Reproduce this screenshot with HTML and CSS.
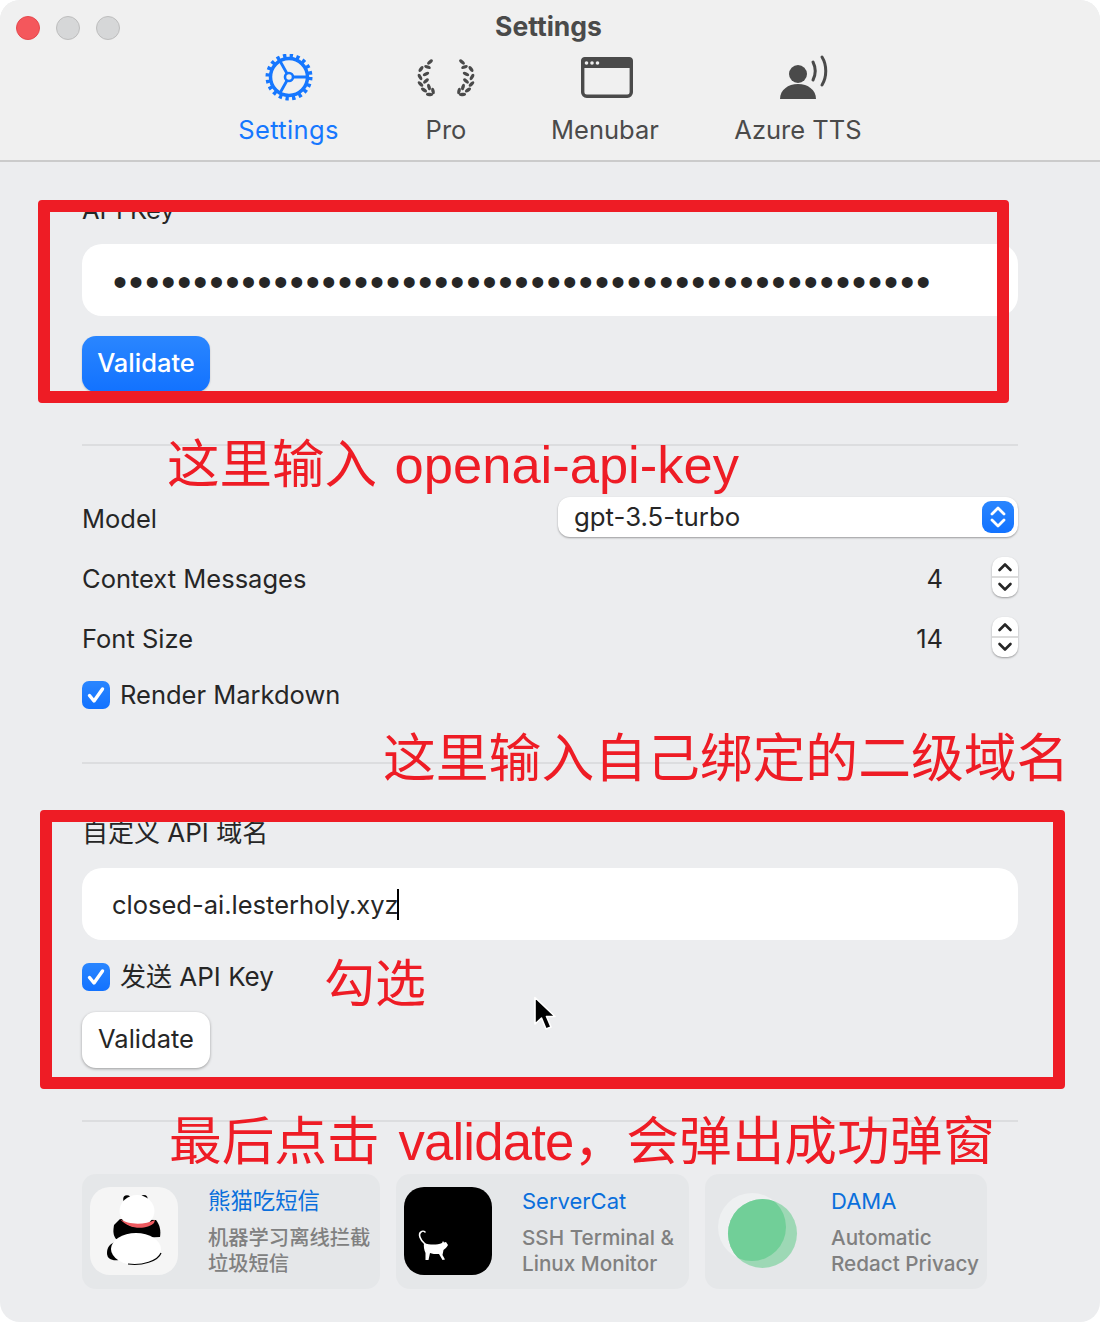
FILE: index.html
```html
<!DOCTYPE html>
<html lang="en">
  <head>
    <meta charset="utf-8" />
    <title>Settings</title>
    <link rel="stylesheet" href="styles.css">
  </head>
  <body>
    <div class="window">
      <div class="titlebar">
        <div class="lights">
          <span class="light red"></span>
          <span class="light"></span>
          <span class="light"></span>
        </div>
        <div class="title">Settings</div>
        <div class="tabs">
          <div class="tab active">
            <svg class="tab-icon" viewBox="0 0 64 50">
              <circle cx="32" cy="23" r="21" fill="none" stroke="#1677ff" stroke-width="5" stroke-dasharray="3.3 3.3" />
              <circle cx="32" cy="23" r="18.5" fill="none" stroke="#1677ff" stroke-width="3.5" />
              <circle cx="32" cy="23" r="4" fill="none" stroke="#1677ff" stroke-width="2.6" />
              <path d="M36 23H50M30 19.5L23 7M30 26.5L23 39" fill="none" stroke="#1677ff" stroke-width="2.8" />
            </svg>
            <span>Settings</span>
          </div>
          <div class="tab">
            <svg class="tab-icon" viewBox="0 0 64 50">
              <defs>
                <g id="laurel" fill="#4a4a4a">
                  <ellipse cx="16" cy="8" rx="3.4" ry="1.7" transform="rotate(-40 16 8)" />
                  <ellipse cx="13.5" cy="13" rx="3.4" ry="1.7" transform="rotate(20 13.5 13)" />
                  <ellipse cx="7" cy="15" rx="3.4" ry="1.7" transform="rotate(-55 7 15)" />
                  <ellipse cx="12" cy="20" rx="3.4" ry="1.7" transform="rotate(-25 12 20)" />
                  <ellipse cx="6" cy="23" rx="3.4" ry="1.7" transform="rotate(60 6 23)" />
                  <ellipse cx="12" cy="27" rx="3.4" ry="1.7" transform="rotate(-40 12 27)" />
                  <ellipse cx="6.5" cy="30" rx="3.4" ry="1.7" transform="rotate(45 6.5 30)" />
                  <ellipse cx="15" cy="33" rx="3.4" ry="1.7" transform="rotate(75 15 33)" />
                  <ellipse cx="10" cy="36" rx="3.4" ry="1.7" transform="rotate(35 10 36)" />
                  <ellipse cx="19" cy="37" rx="3.4" ry="1.7" transform="rotate(80 19 37)" />
                  <ellipse cx="15.5" cy="40.5" rx="3.6" ry="1.7" transform="rotate(5 15.5 40.5)" />
                </g>
              </defs>
              <use href="#laurel" />
              <use href="#laurel" transform="translate(64) scale(-1 1)" />
            </svg>
            <span>Pro</span>
          </div>
          <div class="tab">
            <svg class="tab-icon" viewBox="0 0 64 50">
              <rect x="9.7" y="4.7" width="48.6" height="37.6" rx="4" fill="none" stroke="#4a4a4a" stroke-width="3.4" />
              <path d="M12 3H56C58.5 3 60 4.5 60 7V14H8V7C8 4.5 9.500 3 12 3Z" fill="#4a4a4a" />
              <circle cx="13.500" cy="9" r="1.800" fill="#f0f0f0" />
              <circle cx="19" cy="9" r="1.800" fill="#f0f0f0" />
              <circle cx="24.500" cy="9" r="1.800" fill="#f0f0f0" />
            </svg>
            <span>Menubar</span>
          </div>
          <div class="tab">
            <svg class="tab-icon" viewBox="0 0 64 50">
              <circle cx="32" cy="20" r="9" fill="#4a4a4a" />
              <path d="M14 45C14 36 22 30 32 30C42 30 50 36 50 45Z" fill="#4a4a4a" />
              <path d="M47 8C50 14 50 20 47 26" fill="none" stroke="#4a4a4a" stroke-width="3" stroke-linecap="round" />
              <path d="M56 3C61 11 61 23 56 31" fill="none" stroke="#4a4a4a" stroke-width="3" stroke-linecap="round" />
            </svg>
            <span>Azure TTS</span>
          </div>
        </div>
      </div>

      <div class="content">
        <div class="field-label">API Key</div>
        <div class="text-input password"><span class="dots">•••••••••••••••••••••••••••••••••••••••••••••••••••</span></div>
        <button class="btn primary">Validate</button>

        <div class="divider first"></div>

        <div class="row model-row">
          <span>Model</span>
          <div class="select">
            <span class="select-value">gpt-3.5-turbo</span>
            <span class="select-arrows">
              <svg viewBox="0 0 32 32" width="32" height="32">
                <path d="M10 13L16 7L22 13M10 19L16 25L22 19" fill="none" stroke="#fff" stroke-width="2.800" stroke-linecap="round" stroke-linejoin="round" />
              </svg>
            </span>
          </div>
        </div>

        <div class="row">
          <span>Context Messages</span>
          <div class="number">
            <span>4</span>
            <span class="stepper">
              <svg viewBox="0 0 26 40" width="26" height="40">
                <path d="M7.500 13L13 7.500L18.500 13M7.500 27L13 32.500L18.500 27" fill="none" stroke="#262626" stroke-width="2.600" stroke-linecap="round" stroke-linejoin="round" />
                <path d="M0 20H26" stroke="#dcdcdc" stroke-width="2" />
              </svg>
            </span>
          </div>
        </div>

        <div class="row">
          <span>Font Size</span>
          <div class="number">
            <span>14</span>
            <span class="stepper">
              <svg viewBox="0 0 26 40" width="26" height="40">
                <path d="M7.500 13L13 7.500L18.500 13M7.500 27L13 32.500L18.500 27" fill="none" stroke="#262626" stroke-width="2.600" stroke-linecap="round" stroke-linejoin="round" />
                <path d="M0 20H26" stroke="#dcdcdc" stroke-width="2" />
              </svg>
            </span>
          </div>
        </div>

        <label class="check markdown-check">
          <span class="box">
            <svg viewBox="0 0 28 28" width="28" height="28">
              <path d="M7.500 14.500L12 20L20.500 8" fill="none" stroke="#fff" stroke-width="3.400" stroke-linecap="round" stroke-linejoin="round" />
            </svg>
          </span>
          Render Markdown
        </label>

        <div class="divider second"></div>

        <div class="field-label domain-label">自定义 API 域名</div>
        <div class="text-input domain-input">closed-ai.lesterholy.xyz<span class="caret"></span></div>

        <label class="check send-check">
          <span class="box">
            <svg viewBox="0 0 28 28" width="28" height="28">
              <path d="M7.500 14.500L12 20L20.500 8" fill="none" stroke="#fff" stroke-width="3.400" stroke-linecap="round" stroke-linejoin="round" />
            </svg>
          </span>
          发送 API Key
        </label>
        <button class="btn plain">Validate</button>

        <div class="divider third"></div>

        <div class="cards">
          <div class="card card-panda">
            <svg class="app-icon" viewBox="0 0 88 88">
              <rect width="88" height="88" rx="20" fill="#f5f5f5" />
              <circle cx="37" cy="12" r="3.800" fill="#000" />
              <circle cx="54" cy="11.500" r="3.500" fill="#000" />
              <path d="M24 38C23 44 23 48 26 52L70 50C71 44 70 38 66 33L30 32Z" fill="#000" />
              <ellipse cx="47" cy="24" rx="17.500" ry="16" fill="#fff" />
              <path d="M30 32C38 38 55 38 65 33L64 36C58 42 40 44 30 32Z" fill="#ee5a60" />
              <path d="M17 66C17 60 20 57 25 55L29 73C22 74 17 72 17 66Z" fill="#000" />
              <ellipse cx="46" cy="62" rx="25" ry="16" fill="#fff" />
              <path d="M38 77C52 79 68 74 71 66" fill="none" stroke="#000" stroke-width="1.200" />
            </svg>
            <div class="card-text">
              <div class="card-title">熊猫吃短信</div>
              <div class="card-desc">机器学习离线拦截<br>垃圾短信</div>
            </div>
          </div>
          <div class="card card-cat">
            <svg class="app-icon" viewBox="0 0 88 88">
              <rect width="88" height="88" rx="20" fill="#000" />
              <path d="M21 57C16 53 14 47 17 45C18 44 20 44 21 45" fill="none" stroke="#fff" stroke-width="1.600" stroke-linecap="round" />
              <path d="M20 56C26 58 33 58 38 56L39 54L40 55.500L42 55L44 58C43 60 41 62 39.500 63L38.500 68L41 72.500L38.500 73L35 67C31 67 28 67 26 66L24.500 73H21.500L21.500 66C20 63 19.500 59 20 56Z" fill="#fff" />
            </svg>
            <div class="card-text">
              <div class="card-title">ServerCat</div>
              <div class="card-desc">SSH Terminal &amp;<br>Linux Monitor</div>
            </div>
          </div>
          <div class="card card-dama">
            <svg class="app-icon" viewBox="0 0 88 88">
              <defs>
                <clipPath id="dama-clip"><circle cx="39" cy="40" r="34" /></clipPath>
              </defs>
              <circle cx="39" cy="40" r="34" fill="#eef0f1" />
              <circle cx="49.500" cy="46.500" r="34.500" fill="#9dd8b5" />
              <circle cx="49.500" cy="46.500" r="34.500" fill="#71cf98" clip-path="url(#dama-clip)" />
            </svg>
            <div class="card-text">
              <div class="card-title">DAMA</div>
              <div class="card-desc">Automatic<br>Redact Privacy</div>
            </div>
          </div>
        </div>
      </div>

      <!-- annotations drawn over the screenshot -->
      <div class="mark mark-key"></div>
      <div class="mark mark-domain"></div>
      <div class="note note-key">这里输入 openai-api-key</div>
      <div class="note note-domain">这里输入自己绑定的二级域名</div>
      <div class="note note-check">勾选</div>
      <div class="note note-validate">最后点击 <span class="tight">validate</span>，会弹出成功弹窗</div>
      <svg class="cursor" viewBox="0 0 24 38" width="24" height="38">
        <path d="M2 1.500V28L8.500 22L13 33L18 31L13.500 20.500H22Z" fill="#000" stroke="#fff" stroke-width="1.600" stroke-linejoin="round" />
      </svg>
    </div>
  </body>
</html>
```

FILE: styles.css
```css
* {
  box-sizing: border-box;
}

body {
  margin: 0;
  background: #fff;
  font-family: Inter, "Noto Sans CJK SC", sans-serif;
  color: #262626;
  font-size: 25.5px;
}

.window {
  position: relative;
  width: 1100px;
  height: 1322px;
  background: #ecedef;
  border-radius: 20px;
  overflow: hidden;
}

.titlebar {
  position: relative;
  height: 162px;
  background: #f0f0f0;
  border-bottom: 2px solid #cbcbcb;
}

.lights {
  position: absolute;
  top: 16px;
  left: 16px;
  display: flex;
  gap: 16px;
}

.light {
  width: 24px;
  height: 24px;
  border-radius: 50%;
  background: #d6d7d8;
  border: 1px solid #bdbdbd;
}

.light.red {
  background: #f4575c;
  border-color: #e5484d;
}

.title {
  padding-top: 9px;
  padding-right: 3px;
  line-height: 34px;
  text-align: center;
  font-weight: 700;
  font-size: 26.5px;
  color: #4a4a4a;
}

.tabs {
  display: grid;
  grid-template-columns: 157px 158px 160px 226px;
  margin-top: 11px;
  padding-left: 210px;
}

.tab {
  display: flex;
  flex-direction: column;
  align-items: center;
  color: #4a4a4a;
  line-height: 32px;
}

.tab.active {
  color: #1677ff;
  letter-spacing: 0.35px;
}

.tab-icon {
  width: 64px;
  height: 50px;
  margin-bottom: 10px;
}

.content {
  display: flex;
  flex-direction: column;
  padding: 32px 82px 0;
}

.field-label {
  line-height: 32px;
}

.text-input {
  display: flex;
  align-items: center;
  height: 72px;
  margin-top: 18px;
  padding-left: 30px;
  background: #fff;
  border-radius: 20px;
}

.text-input.password {
  padding-left: 31px;
  padding-top: 4px;
}

.text-input.domain-input {
  margin-top: 19px;
}

.dots {
  font-family: "Liberation Sans", sans-serif;
  font-size: 40px;
  line-height: 40px;
  letter-spacing: 2.06px;
}

.caret {
  display: inline-block;
  width: 2px;
  height: 31px;
  margin-left: -2px;
  background: #000;
}

.btn {
  display: block;
  width: 128px;
  height: 56px;
  margin-top: 20px;
  padding: 0 0 4px;
  font: inherit;
  border: 0;
  border-radius: 14px;
}

.btn.primary {
  color: #fff;
  font-weight: 500;
  background: linear-gradient(#2a86ff, #1272ff);
  box-shadow: 0 1px 2px rgba(0, 0, 0, 0.2);
}

.btn.plain {
  margin-top: 21px;
  color: #262626;
  background: #fff;
  box-shadow: 0 1px 3px rgba(0, 0, 0, 0.35);
}

.divider {
  height: 2px;
  margin-top: 52px;
  background: #dcdddf;
}

.divider.second {
  margin-top: 53px;
}

.row {
  display: flex;
  align-items: center;
  justify-content: space-between;
  height: 40px;
  margin-top: 20px;
}

.row.model-row {
  margin-top: 51px;
}

.row > span,
.number > span:first-child {
  padding-top: 2px;
}

.select {
  display: flex;
  align-items: center;
  justify-content: space-between;
  width: 460px;
  height: 40px;
  padding: 0 4px 0 16px;
  background: #fff;
  border-radius: 12px;
  box-shadow: 0 1px 2px rgba(0, 0, 0, 0.35);
}

.select-value {
  padding-bottom: 2px;
  font-size: 25.8px;
}

.select-arrows {
  display: block;
  width: 32px;
  height: 32px;
  border-radius: 9px;
  background: linear-gradient(#2a86ff, #1272ff);
}

.select-arrows svg,
.stepper svg,
.box svg {
  display: block;
}

.number {
  display: flex;
  align-items: center;
  gap: 49px;
}

.stepper {
  display: block;
  width: 26px;
  height: 40px;
  background: #fff;
  border-radius: 10px;
  box-shadow: 0 1px 2px rgba(0, 0, 0, 0.35);
}

.check {
  display: flex;
  align-items: center;
  gap: 10px;
  height: 28px;
  margin-top: 23px;
  line-height: 28px;
}

.markdown-check {
  margin-top: 24px;
}

.send-check,
.domain-label {
  font-size: 26px;
}

.box {
  display: block;
  width: 28px;
  height: 28px;
  border-radius: 7px;
  background: linear-gradient(#2a86ff, #1272ff);
}

.domain-label {
  margin-top: 53px;
}

.cards {
  display: flex;
  gap: 16px;
  margin-top: 52px;
}

.card {
  display: flex;
  gap: 30px;
  height: 115px;
  padding: 13px 8px 0;
  background: #e5e7e9;
  border-radius: 14px;
}

.card-panda {
  width: 298px;
}

.card-cat {
  width: 293px;
}

.card-dama {
  width: 282px;
}

.app-icon {
  flex: none;
  width: 88px;
  height: 88px;
}

.card-text {
  margin-top: -1px;
  white-space: nowrap;
}

.card-title {
  font-size: 22px;
  line-height: 30px;
  color: #0a6fdc;
}

.card-desc {
  margin-top: 9px;
  font-size: 20.7px;
  font-weight: 500;
  line-height: 26px;
  color: #808080;
}

.card-panda .card-title {
  font-size: 22.4px;
}

.card-panda .card-desc {
  font-size: 20.3px;
}

.mark {
  position: absolute;
  border: 12px solid #ee1c25;
  border-radius: 4px;
}

.mark-key {
  left: 38px;
  top: 200px;
  width: 971px;
  height: 203px;
}

.mark-domain {
  left: 40px;
  top: 810px;
  width: 1025px;
  height: 279px;
}

.note {
  position: absolute;
  font-family: "Liberation Sans", "Noto Sans CJK SC", sans-serif;
  font-size: 52.5px;
  line-height: 60px;
  word-spacing: 3px;
  color: #ee1c25;
  white-space: nowrap;
}

.tight {
  letter-spacing: -0.8px;
}

.note-key {
  left: 167px;
  top: 435px;
}

.note-domain {
  left: 383px;
  top: 729px;
  font-size: 52.8px;
}

.note-check {
  left: 324px;
  top: 955px;
  font-size: 51px;
}

.note-validate {
  left: 169px;
  top: 1112px;
  font-size: 52.7px;
  word-spacing: 4px;
}

.cursor {
  position: absolute;
  left: 533px;
  top: 996px;
}
```
